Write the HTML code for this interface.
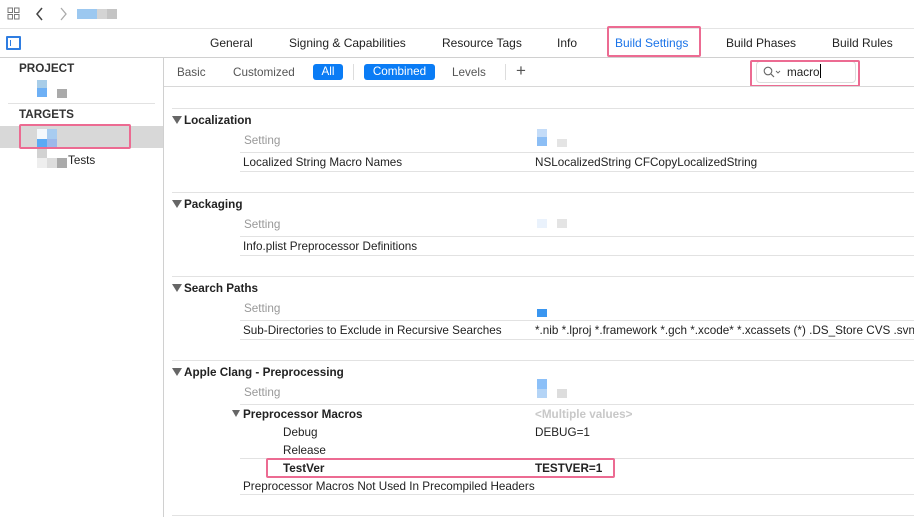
<!DOCTYPE html>
<html><head><meta charset="utf-8"><style>
*{margin:0;padding:0;box-sizing:border-box}
body{width:914px;height:517px;overflow:hidden;background:#fff;font-family:"Liberation Sans",sans-serif;font-size:11.7px;color:#222;position:relative}
.a{position:absolute;white-space:nowrap}
.t{font-size:12px}
.hl{position:absolute;height:1px;background:#e2e2e2}
.b{font-weight:bold}
.g{color:#999}
.pk{position:absolute;border:2px solid #ec6b92;border-radius:2px}
.px{position:absolute}
.tri{position:absolute;width:0;height:0;border-left:5px solid transparent;border-right:5px solid transparent;border-top:8px solid #666}
</style></head><body>
<div class="a" style="left:7px;top:7px;width:13px;height:13px">
<svg width="13" height="13"><g fill="none" stroke="#777" stroke-width="1"><rect x="1" y="1" width="4.5" height="4.5"/><rect x="7.5" y="1" width="4.5" height="4.5"/><rect x="1" y="7.5" width="4.5" height="4.5"/><rect x="7.5" y="7.5" width="4.5" height="4.5"/></g></svg></div>
<svg class="a" style="left:35px;top:7px" width="10" height="14"><path d="M7 1 L2 7 L7 13" fill="none" stroke="#444" stroke-width="1.5"/></svg>
<svg class="a" style="left:59px;top:7px" width="10" height="14"><path d="M2 1 L7 7 L2 13" fill="none" stroke="#aaa" stroke-width="1.3"/></svg>
<div class="px" style="left:77px;top:9px;width:20px;height:10px;background:#9cc8f0"></div>
<div class="px" style="left:97px;top:9px;width:10px;height:10px;background:#d4d4d4"></div>
<div class="px" style="left:107px;top:9px;width:10px;height:10px;background:#c4c4c4"></div>
<div class="hl" style="left:0;top:28px;width:914px;background:#e4e4e4"></div>
<div class="px" style="left:6px;top:36px;width:15px;height:14px;border:2px solid #2f7de1;border-radius:1px"></div>
<div class="px" style="left:10px;top:40px;width:1px;height:6px;background:#2f7de1"></div>
<div class="a t" style="left:210px;top:36px">General</div>
<div class="a t" style="left:289px;top:36px">Signing &amp; Capabilities</div>
<div class="a t" style="left:442px;top:36px">Resource Tags</div>
<div class="a t" style="left:557px;top:36px">Info</div>
<div class="a t" style="left:615px;top:36px;color:#1a73e8">Build Settings</div>
<div class="a t" style="left:726px;top:36px">Build Phases</div>
<div class="a t" style="left:832px;top:36px">Build Rules</div>
<div class="pk" style="left:607px;top:26px;width:94px;height:31px"></div>
<div class="hl" style="left:0;top:57px;width:914px;background:#d0d0d0"></div>
<div class="px" style="left:163px;top:57px;width:1px;height:460px;background:#d0d0d0"></div>
<div class="a b" style="left:19px;top:62px;color:#333">PROJECT</div>
<div class="px" style="left:37px;top:80px;width:10px;height:8px;background:#a8cde8"></div>
<div class="px" style="left:37px;top:88px;width:10px;height:9px;background:#6eb0f5"></div>
<div class="px" style="left:57px;top:89px;width:10px;height:9px;background:#aaa"></div>
<div class="hl" style="left:8px;top:103px;width:147px"></div>
<div class="a b" style="left:19px;top:108px;color:#333">TARGETS</div>
<div class="px" style="left:0;top:126px;width:163px;height:22px;background:#d8d8d8"></div>
<div class="px" style="left:37px;top:129px;width:10px;height:10px;background:#f4f8fc"></div>
<div class="px" style="left:47px;top:129px;width:10px;height:10px;background:#a8ccf0"></div>
<div class="px" style="left:37px;top:139px;width:10px;height:9px;background:#5aaaf5"></div>
<div class="px" style="left:47px;top:139px;width:10px;height:9px;background:#9cb8ea"></div>
<div class="px" style="left:37px;top:148px;width:10px;height:10px;background:#d2d2d2"></div>
<div class="px" style="left:37px;top:158px;width:10px;height:10px;background:#eee"></div>
<div class="px" style="left:47px;top:158px;width:10px;height:10px;background:#ddd"></div>
<div class="px" style="left:57px;top:158px;width:10px;height:10px;background:#aaa"></div>
<div class="a" style="left:68px;top:154px">Tests</div>
<div class="pk" style="left:19px;top:124px;width:112px;height:25px"></div>
<div class="a" style="left:177px;top:66px;color:#555">Basic</div>
<div class="a" style="left:233px;top:66px;color:#555">Customized</div>
<div class="a" style="left:313px;top:64px;width:30px;height:16px;background:#0a7cf5;border-radius:3px;color:#fff;text-align:center;line-height:16px">All</div>
<div class="px" style="left:353px;top:64px;width:1px;height:16px;background:#ddd"></div>
<div class="a" style="left:364px;top:64px;width:71px;height:16px;background:#0a7cf5;border-radius:3px;color:#fff;text-align:center;line-height:16px">Combined</div>
<div class="a" style="left:452px;top:66px;color:#555">Levels</div>
<div class="px" style="left:505px;top:64px;width:1px;height:16px;background:#ddd"></div>
<div class="a" style="left:516px;top:61px;font-size:17px;color:#555;font-weight:300">+</div>
<div class="px" style="left:756px;top:61px;width:100px;height:22px;border:1px solid #ddd;border-radius:4px"></div>
<svg class="a" style="left:763px;top:66px" width="18" height="12"><circle cx="5" cy="5" r="3.8" fill="none" stroke="#666" stroke-width="1.1"/><path d="M8 8 L11 11" stroke="#666" stroke-width="1.2"/><path d="M13 5 L15 7 L17 5" fill="none" stroke="#666" stroke-width="0.9"/></svg>
<div class="a" style="left:787px;top:66px">macro</div>
<div class="px" style="left:820px;top:64px;width:1px;height:14px;background:#000"></div>
<div class="pk" style="left:750px;top:60px;width:110px;height:27px"></div>
<div class="hl" style="left:164px;top:86px;width:750px;background:#d8d8d8"></div>
<div class="hl" style="left:172px;top:108px;width:742px"></div>
<div class="tri" style="left:172px;top:116px"></div>
<div class="a b" style="left:184px;top:114px">Localization</div>
<div class="a g" style="left:244px;top:134px">Setting</div>
<div class="px" style="left:537px;top:129px;width:10px;height:8px;background:#c4dcf8"></div>
<div class="px" style="left:537px;top:137px;width:10px;height:9px;background:#8cbef5"></div>
<div class="px" style="left:557px;top:139px;width:10px;height:8px;background:#e4e4e4"></div>
<div class="hl" style="left:240px;top:152px;width:674px"></div>
<div class="a" style="left:243px;top:156px">Localized String Macro Names</div>
<div class="a" style="left:535px;top:156px">NSLocalizedString CFCopyLocalizedString</div>
<div class="hl" style="left:240px;top:171px;width:674px"></div>
<div class="hl" style="left:172px;top:192px;width:742px"></div>
<div class="tri" style="left:172px;top:200px"></div>
<div class="a b" style="left:184px;top:198px">Packaging</div>
<div class="a g" style="left:244px;top:218px">Setting</div>
<div class="px" style="left:537px;top:219px;width:10px;height:9px;background:#eaf2fc"></div>
<div class="px" style="left:557px;top:219px;width:10px;height:9px;background:#e4e4e4"></div>
<div class="hl" style="left:240px;top:236px;width:674px"></div>
<div class="a" style="left:243px;top:240px">Info.plist Preprocessor Definitions</div>
<div class="hl" style="left:240px;top:255px;width:674px"></div>
<div class="hl" style="left:172px;top:276px;width:742px"></div>
<div class="tri" style="left:172px;top:284px"></div>
<div class="a b" style="left:184px;top:282px">Search Paths</div>
<div class="a g" style="left:244px;top:302px">Setting</div>
<div class="px" style="left:537px;top:309px;width:10px;height:8px;background:#3a96f0"></div>
<div class="hl" style="left:240px;top:320px;width:674px"></div>
<div class="a" style="left:243px;top:324px">Sub-Directories to Exclude in Recursive Searches</div>
<div class="a" style="left:535px;top:324px">*.nib *.lproj *.framework *.gch *.xcode* *.xcassets (*) .DS_Store CVS .svn</div>
<div class="hl" style="left:240px;top:339px;width:674px"></div>
<div class="hl" style="left:172px;top:360px;width:742px"></div>
<div class="tri" style="left:172px;top:368px"></div>
<div class="a b" style="left:184px;top:366px">Apple Clang - Preprocessing</div>
<div class="a g" style="left:244px;top:386px">Setting</div>
<div class="px" style="left:537px;top:379px;width:10px;height:10px;background:#8cc0f8"></div>
<div class="px" style="left:537px;top:389px;width:10px;height:9px;background:#b4d4f6"></div>
<div class="px" style="left:557px;top:389px;width:10px;height:9px;background:#ddd"></div>
<div class="hl" style="left:240px;top:404px;width:674px"></div>
<div class="tri" style="left:232px;top:410px;border-left-width:4px;border-right-width:4px;border-top-width:7px"></div>
<div class="a b" style="left:243px;top:408px">Preprocessor Macros</div>
<div class="a b" style="left:535px;top:408px;color:#c8c8c8">&lt;Multiple values&gt;</div>
<div class="a" style="left:283px;top:426px">Debug</div>
<div class="a" style="left:535px;top:426px">DEBUG=1</div>
<div class="a" style="left:283px;top:444px">Release</div>
<div class="hl" style="left:240px;top:458px;width:674px"></div>
<div class="a b" style="left:283px;top:462px">TestVer</div>
<div class="a b" style="left:535px;top:462px">TESTVER=1</div>
<div class="pk" style="left:266px;top:458px;width:349px;height:20px"></div>
<div class="a" style="left:243px;top:480px">Preprocessor Macros Not Used In Precompiled Headers</div>
<div class="hl" style="left:240px;top:494px;width:674px"></div>
<div class="hl" style="left:172px;top:515px;width:742px"></div>
</body></html>
